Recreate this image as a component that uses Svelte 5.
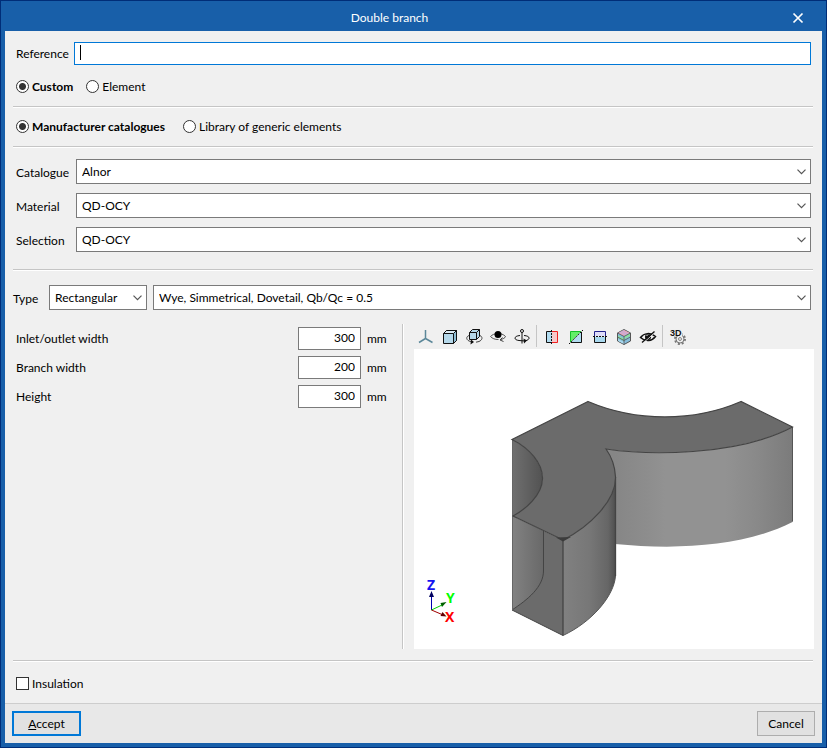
<script lang="ts">
	type Field = { id: string; label: string; value: string };

	let reference = $state('');
	let source = $state('custom');
	let origin = $state('manufacturer');
	let insulation = $state(false);

	let fields: Field[] = $state([
		{ id: 'inlet', label: 'Inlet/outlet width', value: '300' },
		{ id: 'branch', label: 'Branch width', value: '200' },
		{ id: 'height', label: 'Height', value: '300' }
	]);

	const catalogue = [
		{ id: 'catalogue', label: 'Catalogue', value: 'Alnor' },
		{ id: 'material', label: 'Material', value: 'QD-OCY' },
		{ id: 'selection', label: 'Selection', value: 'QD-OCY' }
	];

	const tools = [
		['axes', 'cube', 'orbit', 'look', 'turn'],
		['cutx', 'cutdiag', 'cuty', 'layers', 'hide'],
		['settings']
	];
</script>

{#snippet chevron()}
	<svg class="chevron" width="9" height="6" viewBox="0 0 9 6" aria-hidden="true">
		<path d="M0.5 0.7 L4.5 4.7 L8.5 0.7" fill="none" stroke="#555" stroke-width="1.2" />
	</svg>
{/snippet}

{#snippet icon(name: string)}
	<svg width="24" height="24" viewBox="0 0 24 24" fill="none" stroke="#111" aria-hidden="true">
		{#if name === 'axes'}
			<path d="M11.5 5v8.5L5 17.5M11.5 13.5l7 4" stroke="#5b8799" stroke-width="1.5" />
		{:else if name === 'cube'}
			<path d="M5.5 8.5l3-3h10v10l-3 3h-10z" fill="#b5d8ea" />
			<path d="M5.5 8.5l3-3h10l-3 3z" fill="#dcebf4" />
			<path d="M15.5 8.5l3-3v10l-3 3z" fill="#8fbdd4" />
		{:else if name === 'orbit'}
			<path d="M7 10.500c-3 1.200-3 4 0 5.500l4 1M18 10.500c3 1.500 2.500 4.500-1 6l-3 .7" stroke="#444" />
			<path d="M9 14.500l3 2.500-3.500 2.500z" fill="#111" stroke="none" />
			<path d="M7.500 7.500l3-3h7v7l-3 3h-7z" fill="#b5d8ea" />
			<path d="M7.500 7.500h7v7M14.500 7.500l3-3" />
		{:else if name === 'look'}
			<path d="M4.500 11.500c3-3.500 11-4.500 15 0M4.500 11.500c2 2 4 3 8 3" stroke="#555" />
			<circle cx="12" cy="9.500" r="3.500" fill="#000" stroke="none" />
			<path d="M19.500 11.500c-.5 1.500-2.500 2.500-5 3M16.500 12.500l-2.500 2.500 3.500 1.500" stroke="#444" />
		{:else if name === 'turn'}
			<circle cx="12" cy="6" r="1.500" />
			<path d="M12 7.500v11" />
			<path d="M10 10.500c-6.500.5-6.500 4.500-1 5l6 .5M14 10.500c6.500.5 6.500 4 1.500 5.300" />
			<path d="M13.500 13.500l3.500 2-3 3z" fill="#111" stroke="none" />
		{:else if name === 'cutx'}
			<path d="M12 6.500H6.500v11H12" fill="#b2dcf0" />
			<path d="M12 6.500h5.500v11H12" fill="#f8c9cb" stroke="#f02020" />
			<path d="M11.500 5v14" stroke-dasharray="2 1" />
		{:else if name === 'cutdiag'}
			<path d="M6.500 17.500v-11h11" fill="#62ef68" stroke="#13bf29" />
			<path d="M6.500 17.500h11v-11z" fill="#b2dcf0" />
			<path d="M5 19L19 5" stroke="#fff" />
			<path d="M5 19L19 5" stroke-dasharray="2 1" />
		{:else if name === 'cuty'}
			<path d="M6.500 12V6.500h11V12" fill="#dedcf8" stroke="#22228b" />
			<path d="M6.500 12v5.500h11V12" fill="#a9d8ee" />
			<path d="M5 11.500h14" stroke="#eee" />
			<path d="M5 11.500h14" stroke-dasharray="2 1" />
		{:else if name === 'layers'}
			<path d="M5.500 8L12 4.500 18.500 8v8L12 19.500 5.500 16z" fill="#85bddb" stroke="#555" />
			<path d="M6 8l6-3 6 3-6 3z" fill="#efa2b7" stroke="none" />
			<path d="M8 7l6 3M10 6l6 3" stroke="#b7b3e6" />
			<path d="M6 10.500l6 3v2.500l-6-3zM18 8.500l-6 3v2.500l6-3z" fill="#8be0a1" stroke="none" />
			<path d="M6 14l6 3v2l-6-3z" fill="#a9d8ee" stroke="none" />
			<path d="M5.500 8l6.500 3.500L18.500 8M12 11.500v8M5.500 12l6.500 3.500 6.500-3.500" stroke="#555" stroke-width=".8" />
		{:else if name === 'hide'}
			<path d="M4.500 12.500c3.500-4.500 10-5.500 15-1-3.500 4.700-10 5.700-15 1z" stroke-width="1.500" />
			<circle cx="12" cy="12" r="3" fill="#111" stroke="none" />
			<path d="M7 18L19.500 7" stroke="#efefef" />
			<path d="M6 17.500L18.500 6.500" stroke-width="1.300" />
			<path d="M10.500 11l1.500-1.500" stroke="#efefef" />
		{:else}
			<circle cx="14" cy="14" r="5" stroke="#777" stroke-width="2" stroke-dasharray="2 1.900" />
			<circle cx="14" cy="14" r="4" fill="#efefef" stroke="#777" />
			<circle cx="14" cy="14" r="1.500" stroke="#888" />
			<path d="M4 4h12v7H4z" fill="#efefef" stroke="none" />
			<text class="badge" x="4" y="11">3D</text>
		{/if}
	</svg>
{/snippet}

<div class="dialog" role="dialog" aria-labelledby="title">
	<header>
		<h1 id="title">Double branch</h1>
		<button class="close" aria-label="Close">
			<svg width="12" height="12" viewBox="0 0 12 12">
				<path d="M1.500 1.500l9 9M10.500 1.500l-9 9" stroke="#fff" stroke-width="1.700" />
			</svg>
		</button>
	</header>

	<main>
		<div class="row reference">
			<label for="reference">Reference</label>
			<div class="entry">
				<input id="reference" type="text" bind:value={reference} />
				{#if !reference}<span class="caret"></span>{/if}
			</div>
		</div>

		<div class="options">
			<label class:chosen={source === 'custom'}>
				<input type="radio" value="custom" bind:group={source} />Custom
			</label>
			<label class:chosen={source === 'element'}>
				<input type="radio" value="element" bind:group={source} />Element
			</label>
		</div>
		<hr />
		<div class="options origin">
			<label class:chosen={origin === 'manufacturer'}>
				<input type="radio" value="manufacturer" bind:group={origin} />Manufacturer catalogues
			</label>
			<label class:chosen={origin === 'generic'}>
				<input type="radio" value="generic" bind:group={origin} />Library of generic elements
			</label>
		</div>
		<hr />

		<div class="catalogue">
			{#each catalogue as item}
				<div class="row">
					<label for={item.id}>{item.label}</label>
					<div class="combo">
						<select id={item.id}><option>{item.value}</option></select>
						{@render chevron()}
					</div>
				</div>
			{/each}
		</div>
		<hr />

		<div class="type">
			<label for="shape">Type</label>
			<div class="combo shape">
				<select id="shape"><option>Rectangular</option></select>
				{@render chevron()}
			</div>
			<div class="combo">
				<select aria-label="Branch type">
					<option>Wye, Simmetrical, Dovetail, Qb/Qc = 0.5</option>
				</select>
				{@render chevron()}
			</div>
		</div>

		<div class="detail">
			<div class="fields">
				{#each fields as field}
					<div class="field">
						<label for={field.id}>{field.label}</label>
						<input id={field.id} type="text" bind:value={field.value} />
						<span class="unit">mm</span>
					</div>
				{/each}
			</div>

			<div class="preview">
				<div class="toolbar" role="toolbar">
					{#each tools as group, i}
						{#if i > 0}<span class="divider"></span>{/if}
						{#each group as name}
							<button aria-label={name}>{@render icon(name)}</button>
						{/each}
					{/each}
				</div>

				<svg class="scene" viewBox="0 0 400 300" role="img" aria-label="Double branch model">
					<defs>
						<linearGradient id="far" x1="201" x2="379" y1="0" y2="0" gradientUnits="userSpaceOnUse">
							<stop offset="0" stop-color="#868686" />
							<stop offset=".18" stop-color="#8d8d8d" />
							<stop offset=".28" stop-color="#929292" />
							<stop offset=".62" stop-color="#929292" />
							<stop offset=".8" stop-color="#898989" />
							<stop offset="1" stop-color="#7b7b7b" />
						</linearGradient>
						<linearGradient id="near" x1="149" x2="202" y1="0" y2="0" gradientUnits="userSpaceOnUse">
							<stop offset="0" stop-color="#818181" />
							<stop offset=".5" stop-color="#777" />
							<stop offset=".85" stop-color="#666" />
							<stop offset="1" stop-color="#4d4d4d" />
						</linearGradient>
						<linearGradient id="hollow" x1="98" x2="129" y1="0" y2="0" gradientUnits="userSpaceOnUse">
							<stop offset="0" stop-color="#707070" />
							<stop offset="1" stop-color="#525252" />
						</linearGradient>
						<linearGradient id="inner" x1="98" x2="130" y1="0" y2="0" gradientUnits="userSpaceOnUse">
							<stop offset="0" stop-color="#828282" />
							<stop offset="1" stop-color="#686868" />
						</linearGradient>
					</defs>

					<!-- outer wall of the right branch -->
					<path
						d="M192 100C232 106 322 108 378.500 78V173C330 198 262 201 201 195V128z"
						fill="url(#far)"
					/>
					<path d="M378.500 78V172.500" stroke="#555" />
					<!-- hollow and opening of the left branch -->
					<path d="M98 90.500V172L110 165C118 158 128 146 128.500 130C129 114 115 99 98 90.500z" fill="url(#hollow)" />
					<path d="M98 167L149 191V286.500L98 261z" fill="#6b6b6b" />
					<path
						d="M98 167L129.500 182V221C130 238 113 251 98 261z"
						fill="url(#inner)"
					/>
					<path d="M129.500 182V221C130 238 113 251 98 261L149 286.500" fill="none" stroke="#444" />
					<path d="M98.500 90V261" stroke="#666" />
					<!-- outer wall of the left branch -->
					<path
						d="M149 191C175 178 202 152 201.500 128V227C200 247 178 273 149 286.500z"
						fill="url(#near)"
					/>
					<path d="M149 191V286.500M201.500 128V227" stroke="#444" stroke-width="1.300" />
					<path d="M201.500 227C200 247 178 273 149 286.500" fill="none" stroke="#555" />
					<!-- top face -->
					<path
						d="M174 52.500L98 90.500C115 99 129 114 128.500 130C128 146 112 160 99 167L143 188L149 191C175 178 202 152 201.500 128C201 116 197 107 192 100C232 106 322 108 378.500 78L327 52.500C280 73 222 73 174 52.500z"
						fill="#6b6b6b"
						stroke="#444"
						stroke-width="1.200"
					/>
					<path d="M142 188.500L149 192.500L157 188z" fill="#3c3c3c" />

					<g class="axis">
						<path d="M17.500 261V247" stroke="#0000b0" />
						<path d="M15 248l2.500-6 2.500 6z" fill="#000060" />
						<path d="M17.500 261L28 256" stroke="#00d000" />
						<path d="M26.500 254l6-1-4.500 5z" fill="#006000" />
						<path d="M17.500 261L28 265.500" stroke="#a00000" />
						<path d="M28.500 263l4 4.500-6-.5z" fill="#600000" />
						<text x="13" y="241" fill="#1414f0">Z</text>
						<text x="32" y="254" fill="#0f0">Y</text>
						<text x="31" y="273" fill="#f00">X</text>
					</g>
				</svg>
			</div>
		</div>
		<hr />

		<div class="options insulation">
			<label><input type="checkbox" bind:checked={insulation} />Insulation</label>
		</div>
	</main>

	<footer>
		<button class="accept"><u>A</u>ccept</button>
		<button class="cancel">Cancel</button>
	</footer>
</div>

<style>
	:global(body) {
		margin: 0;
	}

	.dialog {
		display: flex;
		flex-direction: column;
		box-sizing: border-box;
		min-height: 100vh;
		border: 1px solid #002d78;
		padding: 0 4px 4px;
		background: #185fa9;
		color: #000;
		font: 12px/16px Lato, 'Open Sans', sans-serif;
	}

	.dialog * {
		box-sizing: border-box;
	}

	input,
	select,
	button {
		margin: 0;
		font: inherit;
		color: inherit;
		border-radius: 0;
	}

	svg {
		display: block;
	}

	header {
		display: flex;
		align-items: center;
		height: 30px;
		padding: 4px 12px 0 0;
		color: #fff;
	}

	h1 {
		flex: 1;
		margin: 0;
		font: inherit;
		text-align: center;
	}

	.close {
		margin-left: 12px;
		padding: 6px;
		border: 0;
		background: none;
	}

	main {
		flex: 1;
		padding: 11px 9px 9px 8px;
		background: #f0f0f0;
	}

	hr {
		height: 2px;
		margin: 9px 0 8px;
		border: 0;
		border-top: 1px solid #c5c5c5;
		background: #fff;
	}

	.row {
		display: flex;
		align-items: center;
		padding: 0 2px 0 3px;
	}

	.row label {
		width: 60px;
		padding-top: 2px;
	}

	.reference {
		margin-bottom: 11px;
	}

	.reference label {
		width: 58px;
		padding-top: 0;
	}

	.entry {
		position: relative;
		flex: 1;
	}

	.entry input {
		display: block;
		width: 100%;
		height: 23px;
		padding: 0 5px;
		border: 1px solid #0078d7;
		background: #fff;
		outline: none;
	}

	.caret {
		position: absolute;
		top: 3px;
		left: 6px;
		width: 1px;
		height: 15px;
		background: #000;
		pointer-events: none;
	}

	.options {
		display: flex;
		gap: 13px;
		height: 21px;
		padding-left: 3px;
	}

	.options label {
		display: flex;
		align-items: center;
		gap: 3px;
	}

	.origin label {
		min-width: 154px;
	}

	.insulation {
		margin-top: 11px;
	}

	.chosen {
		font-weight: 700;
	}

	input[type='radio'],
	input[type='checkbox'] {
		appearance: none;
		width: 13px;
		height: 13px;
		border: 1px solid #333;
		background: #fff;
	}

	input[type='radio'] {
		border-radius: 50%;
	}

	input[type='radio']:checked {
		background: radial-gradient(circle, #333 3px, #fff 4px);
	}

	input[type='checkbox']:checked {
		background: #333;
		box-shadow: inset 0 0 0 2px #fff;
	}

	.catalogue {
		display: flex;
		flex-direction: column;
		gap: 9px;
		margin: 11px 0 17px;
	}

	.combo {
		position: relative;
		flex: 1;
	}

	.combo select {
		display: block;
		appearance: none;
		width: 100%;
		height: 25px;
		padding: 0 20px 0 5px;
		border: 1px solid #7a7a7a;
		background: #fff;
	}

	.chevron {
		position: absolute;
		top: 10px;
		right: 5px;
		pointer-events: none;
	}

	.type {
		display: flex;
		align-items: center;
		gap: 6px;
		margin-top: 14px;
		padding-right: 2px;
	}

	.type label {
		width: 30px;
		padding-top: 2px;
	}

	.shape {
		flex: 0 0 98px;
	}

	.detail {
		display: flex;
		margin: 14px -1px 11px 0;
	}

	.fields {
		flex: 1;
		display: flex;
		flex-direction: column;
		gap: 6px;
		padding: 3px 13px 0 3px;
	}

	.field {
		display: flex;
		align-items: center;
		gap: 6px;
	}

	.field label {
		flex: 1;
	}

	.field input {
		width: 63px;
		height: 23px;
		padding: 0 5px 2px;
		border: 1px solid #7a7a7a;
		background: #fff;
		text-align: right;
	}

	.unit {
		width: 22px;
	}

	.preview {
		flex: 0 1 412px;
		padding-left: 11px;
		border-left: 1px solid #c5c5c5;
		box-shadow: inset 1px 0 #fff;
	}

	.toolbar {
		display: flex;
		height: 25px;
	}

	.toolbar button {
		padding: 1px 0 0;
		border: 0;
		background: none;
	}

	.divider {
		width: 1px;
		margin: 1px 3px 2px 2px;
		background: #c5c5c5;
	}

	.badge {
		font: 700 9px 'Liberation Sans', sans-serif;
		fill: #111;
		stroke: none;
	}

	.scene {
		width: 100%;
		background: #fff;
	}

	.axis text {
		font: 700 14px 'Open Sans', sans-serif;
	}

	footer {
		display: flex;
		justify-content: space-between;
		padding: 7px;
		border-top: 1px solid #cdcdcd;
		background: #e8e8e8;
	}

	footer button {
		height: 25px;
		padding: 0;
		border: 1px solid #adadad;
		background: #e1e1e1;
	}

	.accept {
		width: 69px;
		border: 2px solid #0078d7;
	}

	.cancel {
		width: 58px;
	}
</style>
